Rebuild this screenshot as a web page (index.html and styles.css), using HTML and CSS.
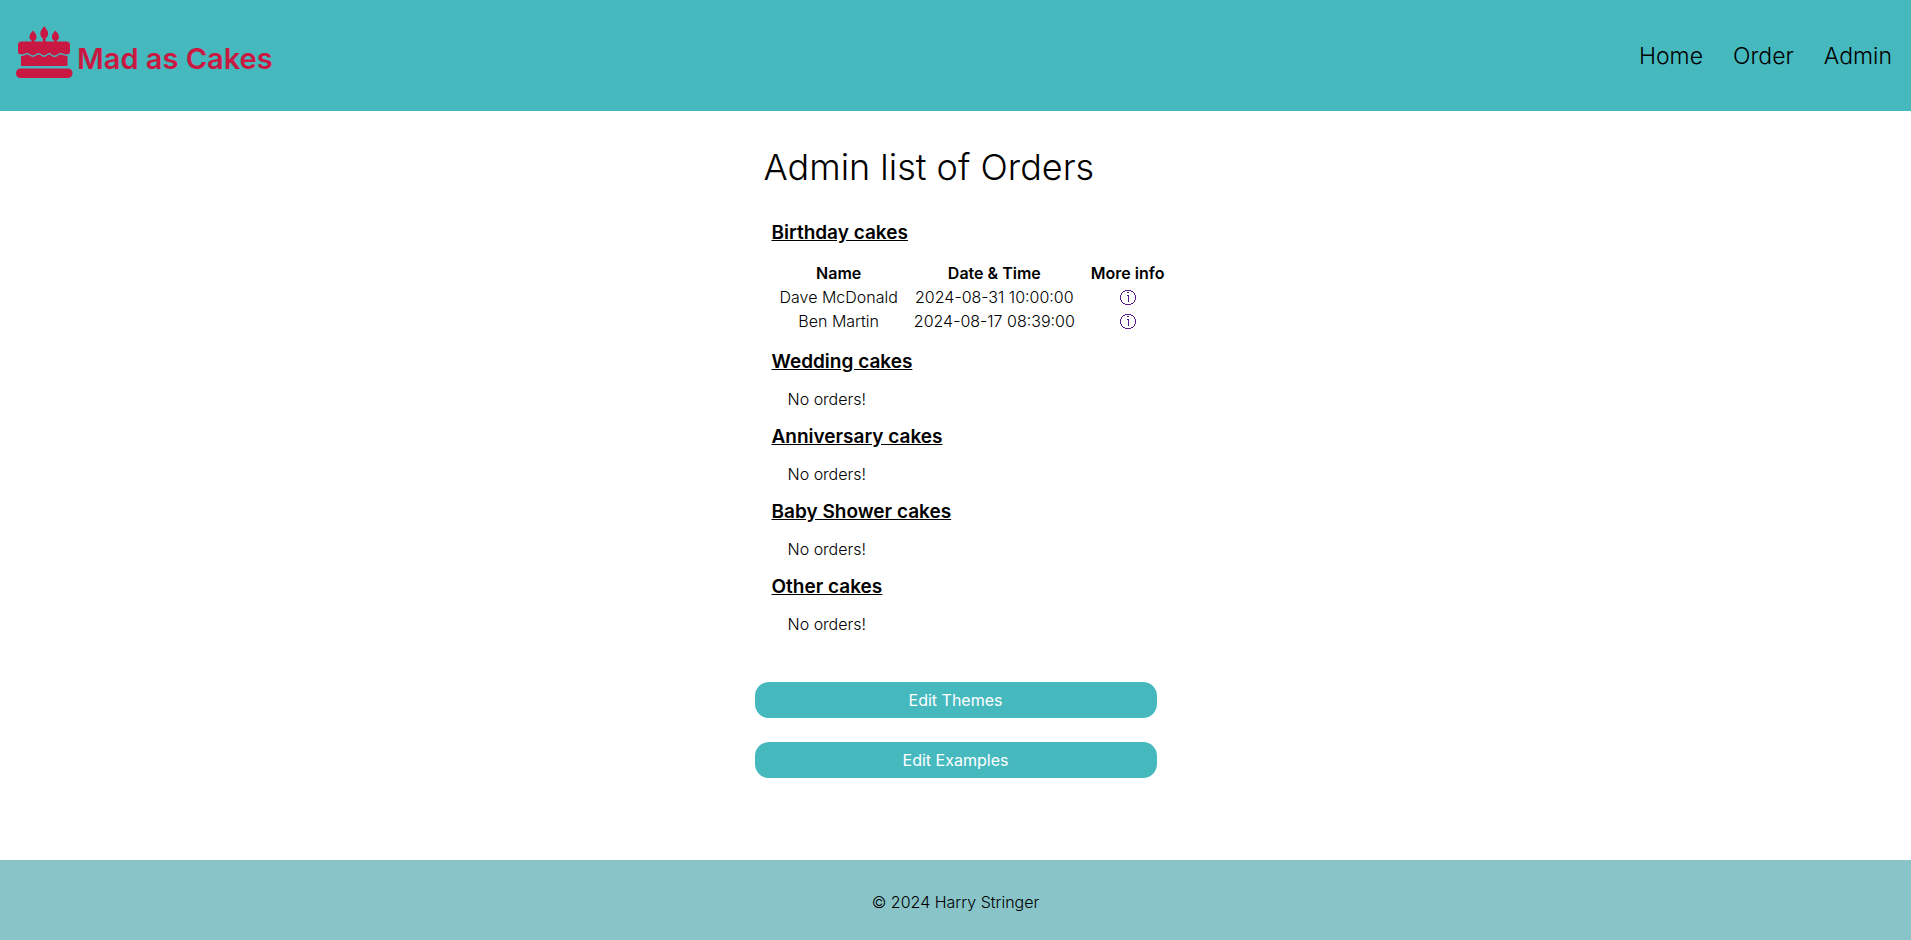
FILE: index.html
```html
<!DOCTYPE html>
<html lang="en">
<head>
<meta charset="utf-8">
<meta name="viewport" content="width=device-width, initial-scale=1">
<title>Mad as Cakes - Admin</title>
<link rel="stylesheet" href="styles.css">
</head>
<body>
<svg class="symbols" aria-hidden="true">
  <symbol id="info" viewBox="0 -1 16 16">
    <path d="M5 0h6v1H5zM3 1h2v1H3zM11 1h2v1h-2zM2 2h1v1H2zM13 2h1v1h-1zM1 3h1v2H1zM14 3h1v2h-1zM0 5h1v5H0zM15 5h1v5h-1zM1 10h1v2H1zM14 10h1v2h-1zM2 12h1v1H2zM13 12h1v1h-1zM3 13h2v1H3zM11 13h2v1h-2zM5 14h6v1H5zM7 2h2v1H7zM7 5h2v7H8V6H7z" fill="currentColor"/>
  </symbol>
</svg>
<header class="site-header">
  <a class="logo" href="#">
    <svg class="logo-icon" viewBox="0 0 57 53" aria-hidden="true">
      <path d="M17 4.500c1.500 2 3.600 3.500 3.600 6.300 0 2-1 3.300-2.300 4V17h-2.600v-2.200c-1.300-.7-2.300-2-2.300-4 0-2.800 2.100-4.300 3.600-6.300zM28.200 0c1.700 3 3.900 4.500 3.900 7.500 0 2.300-1.200 3.900-2.500 4.700V17h-2.800v-4.800c-1.300-.8-2.500-2.400-2.500-4.700 0-3 2.200-4.500 3.900-7.500zM39.400 4.500c1.500 2 3.600 3.500 3.600 6.300 0 2-1 3.300-2.300 4V17h-2.600v-2.200c-1.300-.7-2.300-2-2.300-4 0-2.800 2.100-4.300 3.600-6.300z"/>
      <path d="M5.500 15.500h45a3.500 3.500 0 0 1 3.500 3.500v6.500c0 2-1 3-3.500 3-3 0-3.500-1.500-6-1.500s-3 2.500-6 2.500-3.500-2.500-5.500-2.500-2.500 2.500-5 2.500-3-2.500-5.500-2.500-3 2.500-5.500 2.500-3-2.500-5.500-2.500-3 1.500-6 1.500c-2.500 0-3.500-1-3.500-3V19a3.500 3.500 0 0 1 3.500-3.500z"/>
      <path d="M5 30c3.500 0 4-1.500 6.500-1.500S14.500 31 17 31s3-2.500 5.500-2.500S25.500 31 28 31s3-2.500 5-2.500 2.500 2.500 5.500 2.500 3.500-2.500 6-2.500S48 30 51.500 30v10H5z"/>
      <rect x="0" y="42.500" width="56.500" height="9.500" rx="4.500"/>
    </svg>
    <span class="logo-text">Mad as Cakes</span>
  </a>
  <nav class="nav">
    <a href="#">Home</a>
    <a href="#">Order</a>
    <a href="#">Admin</a>
  </nav>
</header>
<main class="main">
  <h1 class="title">Admin list of Orders</h1>
  <div class="orders">
    <section class="group">
      <h2 class="group-title">Birthday cakes</h2>
      <table class="table">
        <thead>
          <tr><th scope="col">Name</th><th scope="col">Date &amp; Time</th><th scope="col">More info</th></tr>
        </thead>
        <tbody>
          <tr><td>Dave McDonald</td><td>2024-08-31 10:00:00</td><td><a class="info" href="#" aria-label="More info on Dave McDonald"><svg><use href="#info"/></svg></a></td></tr>
          <tr><td>Ben Martin</td><td>2024-08-17 08:39:00</td><td><a class="info" href="#" aria-label="More info on Ben Martin"><svg><use href="#info"/></svg></a></td></tr>
        </tbody>
      </table>
    </section>
    <section class="group">
      <h2 class="group-title">Wedding cakes</h2>
      <p class="empty">No orders!</p>
    </section>
    <section class="group">
      <h2 class="group-title">Anniversary cakes</h2>
      <p class="empty">No orders!</p>
    </section>
    <section class="group">
      <h2 class="group-title">Baby Shower cakes</h2>
      <p class="empty">No orders!</p>
    </section>
    <section class="group">
      <h2 class="group-title">Other cakes</h2>
      <p class="empty">No orders!</p>
    </section>
  </div>
  <div class="actions">
    <button class="button" type="button">Edit Themes</button>
    <button class="button" type="button">Edit Examples</button>
  </div>
</main>
<footer class="site-footer">© 2024 Harry Stringer</footer>
</body>
</html>
```

FILE: styles.css
```css
* {
  box-sizing: border-box;
}

body {
  margin: 0;
  min-height: 100vh;
  display: flex;
  flex-direction: column;
  background: #fff;
  color: #000;
  font-family: Inter, "Liberation Sans", sans-serif;
  font-size: 16px;
  font-weight: 300;
  line-height: 24px;
}

.symbols {
  display: none;
}

.site-header {
  display: flex;
  align-items: center;
  justify-content: space-between;
  padding: 26px 19px 26px 16px;
  background: #46b9bf;
}

.logo {
  display: flex;
  align-items: flex-end;
  gap: 4px;
  padding-bottom: 6px;
  color: #c91842;
  text-decoration: none;
}

.logo-icon {
  width: 57px;
  height: 53px;
  fill: currentColor;
}

.logo-text {
  font-size: 29px;
  font-weight: 600;
  line-height: 40px;
}

.nav {
  display: flex;
  gap: 30px;
}

.nav a {
  color: #000;
  font-size: 23px;
  line-height: 32px;
  text-decoration: none;
}

.main {
  width: 402px;
  max-width: 100%;
  margin: 0 auto;
  padding-top: 32px;
}

.title {
  margin: 0 9px;
  font-size: 36px;
  font-weight: 300;
  line-height: 48px;
}

.orders {
  display: grid;
  gap: 16px;
  padding: 30px 0 0 17px;
}

.group {
  display: grid;
  justify-items: start;
  gap: 16px;
}

.group-title {
  margin: 0;
  font-size: 19px;
  font-weight: 600;
  line-height: 24px;
  text-decoration: underline;
}

.table {
  margin-bottom: 1px;
  border-collapse: collapse;
  text-align: center;
  white-space: nowrap;
}

.table th,
.table td {
  padding: 0 8px;
}

.table th {
  font-weight: 600;
}

.info {
  display: flex;
  justify-content: center;
  color: #551a8b;
}

.info svg {
  width: 16px;
  height: 16px;
  shape-rendering: crispEdges;
}

.empty {
  margin: 0 16px;
  line-height: 19px;
}

.actions {
  display: grid;
  gap: 24px;
  padding: 48px 0;
}

.button {
  padding: 6px 16px;
  border: 0;
  border-radius: 14px;
  background: #46b9bf;
  color: #fff;
  font: inherit;
  font-weight: 400;
}

.site-footer {
  margin-top: auto;
  padding: 30px 16px 26px;
  background: #88c4c8;
  text-align: center;
}
```
